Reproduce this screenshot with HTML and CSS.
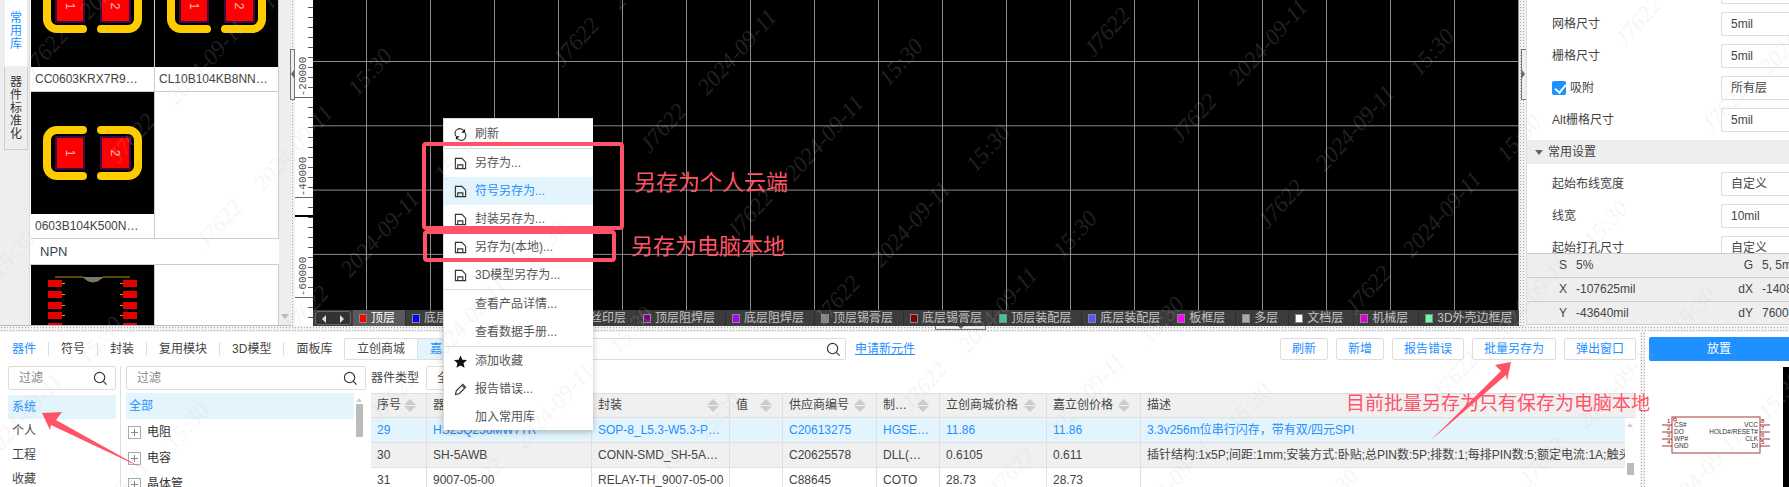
FILE: index.html
```html
<!DOCTYPE html>
<html lang="zh">
<head>
<meta charset="utf-8">
<title>封装库</title>
<link rel="stylesheet" href="styles.css">
</head>
<body>
<svg class="defs" width="0" height="0">
  <symbol id="pad" viewBox="0 0 123 122">
    <path class="silk" d="M52 38H26a10 10 0 0 0-10 10v26a10 10 0 0 0 10 10H52"/>
    <path class="silk" d="M70 38H97a10 10 0 0 1 10 10v26a10 10 0 0 1-10 10H70"/>
    <rect class="pad-edge" x="24" y="44" width="30" height="34"/>
    <rect class="pad-edge" x="69" y="44" width="31" height="34"/>
    <rect class="pad-red" x="26" y="46" width="26" height="30"/>
    <rect class="pad-red" x="71" y="46" width="27" height="30"/>
    <text class="pad-num" transform="translate(39 61) rotate(90)">1</text>
    <text class="pad-num" transform="translate(84 61) rotate(90)">2</text>
  </symbol>
  <symbol id="disk" viewBox="0 0 14 14">
    <path class="ico" d="M1.5 1.5h7l4 4v7h-11zM4 12.5V8.5h5.500v4"/>
  </symbol>
  <symbol id="find" viewBox="0 0 16 16">
    <circle class="ico" cx="7" cy="7" r="5.500"/>
    <path class="ico" d="M11 11l3.500 3.500"/>
  </symbol>
</svg>

<div class="top">
  <aside class="side">
    <div class="side-tabs">
      <div class="side-tab active">常用库</div>
      <div class="side-tab">器件标准化</div>
    </div>
    <div class="lib">
      <div class="lib-grid scrolled">
        <div class="cell"><svg class="art"><use href="#pad"/></svg><div class="cell-label">CC0603KRX7R9…</div></div>
        <div class="cell"><svg class="art"><use href="#pad"/></svg><div class="cell-label">CL10B104KB8NN…</div></div>
        <div class="cell"><svg class="art"><use href="#pad"/></svg><div class="cell-label">0603B104K500N…</div></div>
        <div class="cell empty"></div>
      </div>
      <div class="lib-title">NPN</div>
      <div class="lib-grid">
        <div class="cell">
          <svg class="art" viewBox="0 0 123 122">
            <path class="ic-line" d="M24 12H52Q62 22 72 12H99"/>
            <path class="ic-notch" d="M52 12H72Q62 22 52 12z"/>
            <rect class="ic-pad" x="17" y="15" width="14" height="7"/>
            <rect class="ic-pad" x="17" y="26" width="14" height="7"/>
            <rect class="ic-pad" x="17" y="37" width="14" height="7"/>
            <rect class="ic-pad" x="17" y="47" width="14" height="7"/>
            <rect class="ic-pad" x="17" y="58" width="14" height="7"/>
            <rect class="ic-pad" x="92" y="15" width="14" height="7"/>
            <rect class="ic-pad" x="92" y="26" width="14" height="7"/>
            <rect class="ic-pad" x="92" y="37" width="14" height="7"/>
            <rect class="ic-pad" x="92" y="47" width="14" height="7"/>
            <rect class="ic-pad" x="92" y="58" width="14" height="7"/>
            <path class="ic-pin" d="M31 18.500h3M31 29.500h3M31 40.500h3M31 50.500h3M89 18.500h3M89 29.500h3M89 40.500h3M89 50.500h3"/>
          </svg>
        </div>
        <div class="cell empty"></div>
      </div>
    </div>
    <div class="side-scroll"><span class="arrow-down"></span></div>
  </aside>

  <div class="vsplit"><span class="vhandle"></span></div>

  <div class="ruler">
    <span class="ruler-label first">-20000</span>
    <span class="ruler-label second">-40000</span>
    <span class="ruler-label third">-60000</span>
    <span class="ruler-cursor"></span>
  </div>

  <main class="canvas">
    <div class="grid-area"></div>
    <div class="layers">
      <div class="layer-nav"><span class="tri-left"></span><span class="tri-right"></span></div>
      <div class="layer active"><i class="sw c-top"></i>顶层</div>
      <div class="layer"><i class="sw c-bot"></i>底层</div>
      <div class="layer"><i class="sw c-ts"></i>顶层丝印层</div>
      <div class="layer"><i class="sw c-bs"></i>底层丝印层</div>
      <div class="layer"><i class="sw c-tm"></i>顶层阻焊层</div>
      <div class="layer"><i class="sw c-bm"></i>底层阻焊层</div>
      <div class="layer"><i class="sw c-tp"></i>顶层锡膏层</div>
      <div class="layer"><i class="sw c-bp"></i>底层锡膏层</div>
      <div class="layer"><i class="sw c-ta"></i>顶层装配层</div>
      <div class="layer"><i class="sw c-ba"></i>底层装配层</div>
      <div class="layer"><i class="sw c-bo"></i>板框层</div>
      <div class="layer"><i class="sw c-mu"></i>多层</div>
      <div class="layer"><i class="sw c-do"></i>文档层</div>
      <div class="layer"><i class="sw c-me"></i>机械层</div>
      <div class="layer"><i class="sw c-3d"></i>3D外壳边框层</div>
    </div>
  </main>

  <div class="vsplit wide"><span class="vhandle right"></span></div>

  <aside class="props">
    <div class="props-scroll">
      <div class="prop"><span></span><span class="field"></span></div>
      <div class="prop"><span>网格尺寸</span><span class="field">5mil</span></div>
      <div class="prop"><span>栅格尺寸</span><span class="field">5mil</span></div>
      <div class="prop"><span class="check-wrap"><i class="check"></i>吸附</span><span class="field">所有层</span></div>
      <div class="prop"><span>Alt栅格尺寸</span><span class="field">5mil</span></div>
      <div class="prop-head"><i class="tri-down"></i>常用设置</div>
      <div class="prop"><span>起始布线宽度</span><span class="field">自定义</span></div>
      <div class="prop"><span>线宽</span><span class="field">10mil</span></div>
      <div class="prop"><span>起始打孔尺寸</span><span class="field">自定义</span></div>
    </div>
    <div class="status">
      <div class="status-row"><b>S</b><span>5%</span><b>G</b><span>5, 5mil</span></div>
      <div class="status-row"><b>X</b><span>-107625mil</span><b>dX</b><span>-1408mil</span></div>
      <div class="status-row"><b>Y</b><span>-43640mil</span><b>dY</b><span>7600mil</span></div>
    </div>
  </aside>
</div>

<div class="hsplit"><span class="hhandle"></span></div>

<section class="bottom">
  <div class="browser">
    <div class="toolbar">
      <nav class="tabs">
        <span class="tab active">器件</span>
        <span class="tab">符号</span>
        <span class="tab">封装</span>
        <span class="tab">复用模块</span>
        <span class="tab">3D模型</span>
        <span class="tab">面板库</span>
      </nav>
      <div class="stores">
        <span class="store">立创商城</span>
        <span class="store active">嘉立创商城</span>
      </div>
      <div class="search"><svg class="find"><use href="#find"/></svg></div>
      <a class="apply">申请新元件</a>
      <div class="actions">
        <span class="btn">刷新</span>
        <span class="btn">新增</span>
        <span class="btn">报告错误</span>
        <span class="btn">批量另存为</span>
        <span class="btn">弹出窗口</span>
      </div>
    </div>
    <div class="columns">
      <div class="col-owner">
        <div class="filter"><span>过滤</span><svg class="find"><use href="#find"/></svg></div>
        <div class="owner-item active">系统</div>
        <div class="owner-item">个人</div>
        <div class="owner-item">工程</div>
        <div class="owner-item">收藏</div>
      </div>
      <div class="col-tree">
        <div class="filter"><span>过滤</span><svg class="find"><use href="#find"/></svg></div>
        <div class="tree-body">
          <div class="tree-list">
            <div class="tree-all">全部</div>
            <div class="tree-item"><i class="plus"></i>电阻</div>
            <div class="tree-item"><i class="plus"></i>电容</div>
            <div class="tree-item"><i class="plus"></i>晶体管</div>
          </div>
          <div class="tree-scroll"><span class="arrow-up"></span><span class="thumb"></span></div>
        </div>
      </div>
      <div class="col-table">
        <div class="type-row">
          <span>器件类型</span>
          <span class="type-select">全部</span>
        </div>
        <div class="table">
          <div class="row head">
            <div>序号<i class="sort"></i></div>
            <div>器件<i class="sort"></i></div>
            <div>封装<i class="sort"></i></div>
            <div>值<i class="sort"></i></div>
            <div>供应商编号<i class="sort"></i></div>
            <div>制…<i class="sort"></i></div>
            <div>立创商城价格<i class="sort"></i></div>
            <div>嘉立创价格<i class="sort"></i></div>
            <div>描述</div>
          </div>
          <div class="table-body">
            <div class="rows">
              <div class="row picked">
                <div>29</div><div>HS25Q256MW7TR</div><div>SOP-8_L5.3-W5.3-P…</div><div></div><div>C20613275</div><div>HGSE…</div><div>11.86</div><div>11.86</div><div>3.3v256m位串行闪存，带有双/四元SPI</div>
              </div>
              <div class="row grey">
                <div>30</div><div>SH-5AWB</div><div>CONN-SMD_SH-5A…</div><div></div><div>C20625578</div><div>DLL(…</div><div>0.6105</div><div>0.611</div><div>插针结构:1x5P;间距:1mm;安装方式:卧贴;总PIN数:5P;排数:1;每排PIN数:5;额定电流:1A;触头材料:磷青铜</div>
              </div>
              <div class="row">
                <div>31</div><div>9007-05-00</div><div>RELAY-TH_9007-05-00</div><div></div><div>C88645</div><div>COTO</div><div>28.73</div><div>28.73</div><div></div>
              </div>
            </div>
            <div class="table-scroll"><span class="arrow-up"></span><span class="thumb"></span></div>
          </div>
        </div>
      </div>
    </div>
  </div>

  <div class="vsplit bottom-split"></div>

  <div class="preview">
    <div class="place">放置</div>
    <div class="preview-body">
      <div class="symbol-box">
        <svg class="symbol" viewBox="0 0 115 50">
          <rect class="sym-body" x="13" y="7" width="88" height="36"/>
          <circle class="sym-dot" cx="16" cy="9.500" r="1.500"/>
          <path class="sym-pin" d="M3 15h10M3 22h10M3 29h10M3 36h10M101 15h10M101 22h10M101 29h10M101 36h10"/>
          <text class="sym-text" x="15" y="17">CS#</text>
          <text class="sym-text" x="15" y="24">DO</text>
          <text class="sym-text" x="15" y="31">WP#</text>
          <text class="sym-text" x="15" y="38">GND</text>
          <text class="sym-text end" x="99" y="17">VCC</text>
          <text class="sym-text end" x="99" y="24">HOLD#/RESET#</text>
          <text class="sym-text end" x="99" y="31">CLK</text>
          <text class="sym-text end" x="99" y="38">DI</text>
          <text class="sym-num" x="8" y="13">1</text>
          <text class="sym-num" x="8" y="20">2</text>
          <text class="sym-num" x="8" y="27">3</text>
          <text class="sym-num" x="8" y="34">4</text>
          <text class="sym-num" x="102" y="13">8</text>
          <text class="sym-num" x="102" y="20">7</text>
          <text class="sym-num" x="102" y="27">6</text>
          <text class="sym-num" x="102" y="34">5</text>
        </svg>
      </div>
      <div class="preview-black"></div>
    </div>
  </div>
</section>

<div class="menu">
  <div class="menu-item"><svg class="menu-ico" viewBox="0 0 14 14"><path class="ico" d="M2 8.500A5 5 0 0 1 10.500 3M12 5.500A5 5 0 0 1 3.500 11"/><path class="ico-fill" d="M12 1v4H8zM2 13V9h4z"/></svg>刷新</div>
  <hr class="menu-sep">
  <div class="menu-item"><svg class="menu-ico"><use href="#disk"/></svg>另存为...</div>
  <div class="menu-item hot"><svg class="menu-ico"><use href="#disk"/></svg>符号另存为...</div>
  <div class="menu-item"><svg class="menu-ico"><use href="#disk"/></svg>封装另存为...</div>
  <div class="menu-item"><svg class="menu-ico"><use href="#disk"/></svg>另存为(本地)...</div>
  <div class="menu-item"><svg class="menu-ico"><use href="#disk"/></svg>3D模型另存为...</div>
  <hr class="menu-sep">
  <div class="menu-item"><span class="menu-ico"></span>查看产品详情...</div>
  <div class="menu-item"><span class="menu-ico"></span>查看数据手册...</div>
  <hr class="menu-sep">
  <div class="menu-item"><svg class="menu-ico" viewBox="0 0 14 14"><path class="ico-fill" d="M7 .5l2 4.500 5 .5-3.700 3.300 1.100 5L7 11.200 2.600 13.800l1.100-5L0 5.500l5-.5z"/></svg>添加收藏</div>
  <div class="menu-item"><svg class="menu-ico" viewBox="0 0 14 14"><path class="ico" d="M1.500 12.500l1-4L9.500 1.500l3 3-7 7zM8.500 2.500l3 3"/></svg>报告错误...</div>
  <div class="menu-item"><span class="menu-ico"></span>加入常用库</div>
</div>

<svg class="watermark" width="1789" height="487">
  <defs>
    <g id="wm-set">
      <text transform="translate(45 52) rotate(-48)">J7622</text>
      <text transform="translate(206 62) rotate(-48)">2024-09-11</text>
      <text transform="translate(370 72) rotate(-48)">15:30</text>
    </g>
    <g id="wm-row">
      <use href="#wm-set" x="-531" y="10"/>
      <use href="#wm-set"/>
      <use href="#wm-set" x="531" y="-10"/>
      <use href="#wm-set" x="1062" y="-20"/>
      <use href="#wm-set" x="1593" y="-30"/>
    </g>
  </defs>
  <use href="#wm-row" x="-87" y="-86"/>
  <use href="#wm-row"/>
  <use href="#wm-row" x="87" y="86"/>
  <use href="#wm-row" x="174" y="172"/>
  <use href="#wm-row" x="261" y="258"/>
  <use href="#wm-row" x="348" y="344"/>
  <use href="#wm-row" x="435" y="430"/>
  <use href="#wm-row" x="522" y="516"/>
</svg>

<div class="mark box-cloud"></div>
<div class="mark box-local"></div>
<div class="note note-cloud">另存为个人云端</div>
<div class="note note-local">另存为电脑本地</div>
<div class="note note-batch">目前批量另存为只有保存为电脑本地</div>
<svg class="arrows" width="1789" height="487">
  <polygon class="arrow" points="42,413 62,412 56,420 142,468 51,425 50,430"/>
  <polygon class="arrow" points="1511,362 1495,365 1501,371 1430,441 1506,375 1507,381"/>
</svg>
</body>
</html>
```
FILE: styles.css
```css
* { box-sizing: border-box; }
html, body { margin: 0; padding: 0; }
body {
  position: relative;
  width: 1789px;
  height: 487px;
  overflow: hidden;
  background: #fff;
  color: #444;
  font: 12px/1.2 "Liberation Sans", "Noto Sans CJK SC", sans-serif;
}
i { font-style: normal; }
.defs { position: absolute; }
.ico { fill: none; stroke: #333; stroke-width: 1.2; }
.ico-fill { fill: #111; stroke: none; }

/* top band */
.top { display: flex; height: 326px; }
.side { display: flex; width: 291px; flex: none; background: #eee; border-bottom: 1px solid #a9bdd6; }
.side-tabs { width: 30px; padding-left: 4px; flex: none; border-right: 1px solid #ddd; }
.side-tab {
  width: 24px;
  padding: 9px 0 0 5px;
  line-height: 13px;
  font-size: 12px;
  word-break: break-all;
  border: 1px solid #ccc;
  border-top: 0;
  color: #333;
}
.side-tab.active { height: 67px; padding-top: 12px; background: #fff; color: #1e90ff; border-color: #eee; }
.side-tab + .side-tab { height: 83px; }
.lib { width: 249px; flex: none; background: #fff; overflow: hidden; }
.lib-grid { display: grid; grid-template-columns: 124px 124px; padding-left: 1px; }
.lib-grid.scrolled { margin-top: -55px; }
.cell { border-right: 1px solid #ccc; border-bottom: 1px solid #ccc; display: flex; flex-direction: column; }
.cell.empty { background: #fff; }
.art { display: block; width: 123px; height: 122px; background: #000; flex: none; }
.cell-label { height: 24px; line-height: 24px; padding-left: 4px; color: #444; white-space: nowrap; overflow: hidden; background: #fff; }
.silk { fill: none; stroke: #fc0; stroke-width: 8; stroke-linecap: round; }
.pad-edge { fill: #3d0a3d; }
.pad-red { fill: #f00; }
.pad-num { fill: #f0c0c0; font: 12px "Liberation Sans", sans-serif; text-anchor: middle; dominant-baseline: central; }
.lib-title { height: 26px; line-height: 25px; padding-left: 10px; font-size: 13px; color: #345; border-bottom: 1px solid #ccc; }
.ic-line { fill: none; stroke: #b8900a; stroke-width: 1; }
.ic-notch { fill: #777; }
.ic-pad { fill: #e60000; }
.ic-pin { fill: none; stroke: #c8a000; stroke-width: 1; }
.side-scroll { position: relative; flex: 1; background: #eee; }
.arrow-down { position: absolute; left: 2px; bottom: 6px; border: 4px solid transparent; border-top: 5px solid #bbb; border-bottom: 0; }

.vsplit {
  position: relative;
  width: 4px;
  flex: none;
  background: #f2f2f2 radial-gradient(circle, #aaa 35%, transparent 40%) 0 0 / 3px 3px;
}
.vsplit.wide { width: 7px; }
.vhandle { position: absolute; left: -1px; top: 49px; width: 5px; height: 51px; border: 1px solid #777; background: #eee; }
.vhandle::after { content: ""; position: absolute; left: 0; top: 20px; border: 4px solid transparent; border-left: 0; border-right: 3px solid #666; }
.vhandle.right { left: 2px; border-right: 0; }
.vhandle.right::after { border-right: 0; border-left: 3px solid #666; }

.ruler {
  position: relative;
  width: 18px;
  flex: none;
  background: #fff linear-gradient(#555 1px, transparent 1px) right 7px / 5px 10px repeat-y;
}
.ruler::before {
  content: "";
  position: absolute;
  inset: 0;
  background: linear-gradient(#666 1px, transparent 1px) 0 97px / 100% 100px repeat-y;
}
.ruler-label {
  position: absolute;
  left: -12px;
  width: 40px;
  height: 11px;
  font: 11px/11px "Liberation Mono", monospace;
  color: #555;
  text-align: center;
  transform: rotate(-90deg);
}
.ruler-label.first { top: 71px; }
.ruler-label.second { top: 171px; }
.ruler-label.third { top: 271px; }
.ruler-cursor { position: absolute; left: 0; right: 0; top: 215px; height: 2px; background: #000; }

.canvas { width: 1206px; flex: none; display: flex; flex-direction: column; background: #000; }
.grid-area {
  flex: 1;
  background:
    linear-gradient(90deg, #8a8a8a 1px, transparent 1px) 53px 0 / 64px 64px,
    linear-gradient(#8a8a8a 1px, transparent 1px) 0 61px / 64px 64.300px;
}
.layers { display: flex; height: 16px; flex: none; overflow: hidden; background: #3c3c3c; color: #c4c4c4; line-height: 16px; white-space: nowrap; padding-left: 2px; }
.layer-nav { position: relative; width: 36px; flex: none; margin: 1px 2px 1px 0; border: 1px solid #666; border-radius: 3px; background: #333; }
.tri-left, .tri-right { position: absolute; top: 3px; border: 3px solid transparent; border-top-width: 4px; border-bottom-width: 4px; }
.tri-left { left: 6px; border-left: 0; border-right: 4px solid #ddd; }
.tri-right { right: 6px; border-right: 0; border-left: 4px solid #ddd; }
.layer { display: flex; align-items: center; flex: none; padding: 0 10px 0 6px; border-right: 1px solid #2e2e2e; }
.layer.active { background: #5a5a5a; color: #fff; }
.sw { width: 8px; height: 9px; margin-right: 4px; border: 1px solid #888; flex: none; }
.c-top { background: #f00; }
.c-bot { background: #00f; }
.c-ts { background: #fc0; }
.c-bs { background: #6c3; }
.c-tm { background: #800080; }
.c-bm { background: #a0f; }
.c-tp { background: #808080; }
.c-bp { background: #800000; }
.c-ta { background: #3c9; }
.c-ba { background: #55f; }
.c-bo { background: #f0f; }
.c-mu { background: #aaa; }
.c-do { background: #fff; }
.c-me { background: #d0d; }
.c-3d { background: #6f9; }

.props { flex: 1; min-width: 0; display: flex; flex-direction: column; background: #fff; border-left: 1px solid #ddd; }
.props-scroll { height: 253px; flex: none; overflow: hidden; }
.prop { display: flex; align-items: center; height: 32px; padding-left: 25px; white-space: nowrap; }
.prop:first-child { margin-top: -24px; }
.prop > span:first-child { width: 169px; flex: none; }
.field { flex: 1; height: 24px; line-height: 22px; padding-left: 9px; border: 1px solid #ddd; border-right: 0; border-radius: 2px 0 0 2px; color: #444; }
.check-wrap { display: flex; align-items: center; }
.check { position: relative; width: 14px; height: 14px; margin-right: 4px; background: #1e90ff; border-radius: 2px; }
.check::after { content: ""; position: absolute; left: 4.500px; top: 1px; width: 5px; height: 9px; border: solid #fff; border-width: 0 2px 2px 0; transform: rotate(40deg); }
.prop-head { display: flex; align-items: center; height: 24px; margin: 4px 0; padding-left: 8px; background: #eee; color: #444; }
.tri-down { margin-right: 5px; border: 4px solid transparent; border-top: 5px solid #666; border-bottom: 0; }
.status { flex: none; background: #eee; }
.status-row { display: grid; grid-template-columns: 40px 146px 40px 1fr; height: 24px; line-height: 23px; border-top: 1px solid #ccc; white-space: nowrap; overflow: hidden; }
.status-row:last-child { border-bottom: 1px solid #ccc; }
.status-row b { font-weight: 400; text-align: right; }
.status-row span { padding-left: 9px; }

.hsplit { position: relative; height: 6px; background: #f2f2f2 radial-gradient(circle, #aaa 35%, transparent 40%) 0 0 / 3px 3px; }
.hhandle { position: absolute; left: 935px; top: 0; width: 51px; height: 4px; background: #eee; border: 1px solid #777; border-top: 0; }
.hhandle::after { content: ""; position: absolute; left: 22px; top: 0; border: 3px solid transparent; border-top: 3px solid #666; border-bottom: 0; }

/* bottom band */
.bottom { display: flex; height: 155px; }
.browser { width: 1640px; flex: none; padding-top: 6px; overflow: hidden; }
.toolbar { display: flex; align-items: center; height: 22px; }
.tabs { display: flex; width: 344px; flex: none; white-space: nowrap; }
.tab { padding: 0 12px; line-height: 14px; border-right: 1px solid #ddd; color: #444; }
.tab:last-child { border-right: 0; }
.tab.active { color: #1e90ff; }
.stores { display: flex; height: 22px; flex: none; white-space: nowrap; }
.store { padding: 0 12px; line-height: 20px; border: 1px solid #ddd; border-right: 0; border-radius: 2px 0 0 2px; }
.store.active { background: #e3f4fd; color: #1e90ff; }
.search { display: flex; align-items: center; justify-content: flex-end; width: 338px; height: 22px; margin-left: 6px; padding-right: 4px; border: 1px solid #ddd; border-radius: 2px; }
.find { width: 15px; height: 15px; flex: none; }
.apply { margin-left: 9px; color: #1e90ff; text-decoration: underline; }
.actions { display: flex; gap: 8px; margin-left: auto; padding-right: 4px; }
.btn { height: 22px; padding: 0 11px; line-height: 20px; border: 1px solid #ddd; border-radius: 2px; color: #1e90ff; white-space: nowrap; }
.columns { display: flex; margin-top: 6px; height: 121px; }
.filter { display: flex; align-items: center; justify-content: space-between; height: 24px; padding: 0 7px 0 10px; border: 1px solid #ddd; border-radius: 2px; color: #888; }
.col-owner { width: 121px; flex: none; padding: 0 4px 0 8px; border-right: 1px solid #ddd; }
.owner-item { height: 24px; line-height: 24px; padding-left: 4px; color: #444; }
.owner-item.active { margin-top: 5px; background: #e3f4fd; color: #1e90ff; }
.col-tree { width: 245px; flex: none; padding-left: 5px; }
.tree-body { display: flex; margin-top: 3px; }
.tree-list { width: 228px; flex: none; }
.tree-all { height: 26px; line-height: 26px; padding-left: 3px; background: #e3f4fd; color: #1e90ff; }
.tree-item { display: flex; align-items: center; height: 26px; padding-left: 2px; color: #333; }
.plus {
  width: 13px;
  height: 13px;
  margin-right: 6px;
  border: 1px solid #aaa;
  background:
    linear-gradient(#888, #888) center / 7px 1px no-repeat,
    linear-gradient(#888, #888) center / 1px 7px no-repeat;
}
.tree-scroll { position: relative; flex: 1; margin-left: 2px; }
.tree-scroll .arrow-up { left: 0; top: 5px; }
.tree-scroll .thumb { left: 0; top: 11px; width: 7px; height: 33px; }
.arrow-up { position: absolute; border: 3.500px solid transparent; border-bottom: 4px solid #ccc; border-top: 0; }
.thumb { position: absolute; background: #bbb; }
.col-table { flex: 1; min-width: 0; padding-left: 5px; }
.type-row { display: flex; align-items: center; height: 24px; color: #444; }
.type-select { width: 120px; height: 24px; margin-left: 7px; padding-left: 10px; line-height: 22px; border: 1px solid #ddd; border-radius: 2px; }
.table { margin-top: 3px; width: 1265px; color: #444; }
.row { display: grid; grid-template-columns: 56px 165px 138px 53px 94px 63px 107px 94px 1fr; height: 25px; border-bottom: 1px solid #e0e0e0; }
.row > div { display: flex; align-items: center; justify-content: space-between; min-width: 0; padding: 0 10px 0 6px; white-space: nowrap; overflow: hidden; border-right: 1px solid #e0e0e0; }
.row > div:last-child { border-right: 0; padding-right: 0; justify-content: flex-start; }
.head { background: #f0f0f0; border-top: 1px solid #e0e0e0; }
.sort { position: relative; flex: none; width: 12px; height: 13px; }
.sort::before, .sort::after { content: ""; position: absolute; left: 0; border: 6px solid transparent; }
.sort::before { top: 0; border-top: 0; border-bottom-color: #ccc; }
.sort::after { bottom: 0; border-bottom: 0; border-top-color: #ccc; }
.table-body { display: flex; }
.rows { width: 1254px; flex: none; }
.picked { background: #e3f4fd; color: #1e90ff; }
.grey { background: #f0f0f0; }
.table-scroll { position: relative; flex: 1; }
.table-scroll .arrow-up { left: 2px; top: 5px; }
.table-scroll .thumb { left: 2px; top: 45px; width: 7px; height: 12px; }

.bottom-split { width: 5px; background: #f2f2f2 radial-gradient(circle, #aaa 35%, transparent 40%) 0 0 / 3px 3px; }
.preview { flex: 1; min-width: 0; display: flex; flex-direction: column; padding: 5px 0 0 4px; }
.place { flex: none; height: 24px; line-height: 24px; text-align: center; color: #fff; background: #1e90ff; border-radius: 2px 0 0 2px; }
.preview-body { flex: 1; display: flex; margin-top: 6px; }
.symbol-box { flex: 1; display: flex; align-items: center; justify-content: center; padding-top: 16px; }
.symbol { width: 115px; height: 50px; }
.preview-black { width: 6px; background: #000; }
.sym-body { fill: #fff; stroke: #b55a5a; stroke-width: 1.2; }
.sym-dot { fill: #fff; stroke: #a00; stroke-width: .8; }
.sym-pin { fill: none; stroke: #800; stroke-width: .8; }
.sym-text { font: 6.500px "Liberation Sans", sans-serif; fill: #333; }
.sym-text.end { text-anchor: end; }
.sym-num { font: 6px "Liberation Sans", sans-serif; fill: #800; }

/* overlays */
.menu {
  position: absolute;
  left: 443px;
  top: 118px;
  width: 150px;
  height: 312px;
  padding-top: 1px;
  background: #fff;
  border: 1px solid #ddd;
  border-width: 1px 0 0 1px;
  box-shadow: 0 2px 6px rgba(0, 0, 0, .25);
  color: #555;
}
.menu-item { display: flex; align-items: center; height: 28px; padding-left: 10px; white-space: nowrap; }
.menu-item.hot { background: #e3f4fd; color: #1e90ff; }
.menu-ico { display: block; width: 13px; height: 13px; margin-right: 8px; flex: none; }
.menu-sep { height: 1px; margin: 0; border: 0; background: #ddd; }

.watermark, .arrows { position: absolute; left: 0; top: 0; pointer-events: none; }
.watermark text {
  font: italic 23px "Liberation Serif", serif;
  fill: rgba(200, 200, 200, .18);
  text-anchor: middle;
  dominant-baseline: central;
}
.arrow { fill: #ff5468; }
.mark { position: absolute; border: 4px solid #ff5468; border-radius: 4px; }
.box-cloud { left: 422px; top: 142px; width: 202px; height: 88px; }
.box-local { left: 423px; top: 230px; width: 193px; height: 32px; }
.note { position: absolute; color: #ff5468; white-space: nowrap; }
.note-cloud { left: 634px; top: 170px; font-size: 22px; }
.note-local { left: 631px; top: 234px; font-size: 22px; }
.note-batch { left: 1346px; top: 393px; font-size: 19px; }
```
